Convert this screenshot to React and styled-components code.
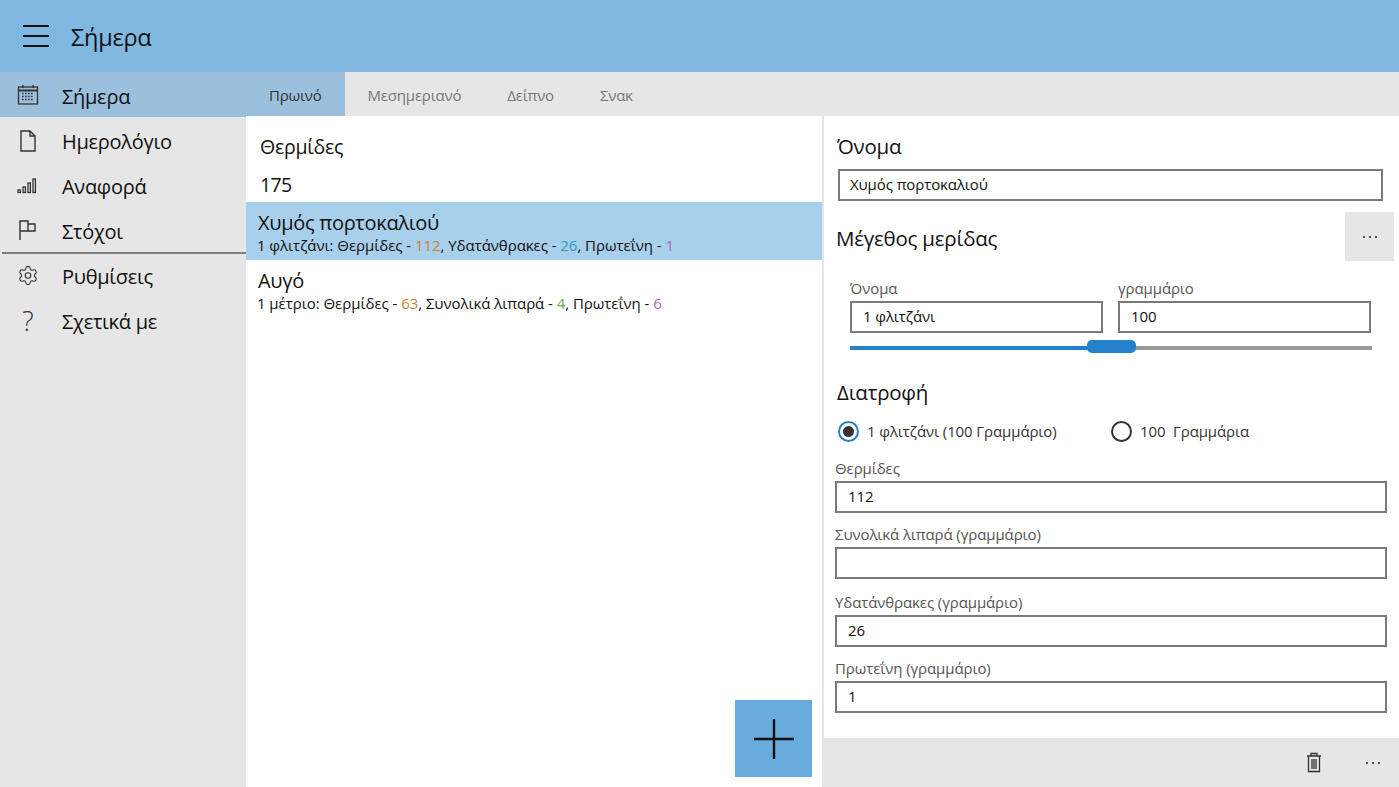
import styled, { createGlobalStyle } from 'styled-components'
import { Settings } from 'lucide-react'

const Global = createGlobalStyle`
  html, body { margin: 0; padding: 0; height: 100%; overflow: hidden; }
  body { font-family: "Open Sans", "Noto Sans", sans-serif; color: #111; background: #fff; }
  * { box-sizing: border-box; }
`
const Page = styled.div`
  width: 1399px;
  height: 787px;
  display: flex;
  flex-direction: column;
`
const Header = styled.header`
  height: 72px;
  background: #7fb8e1;
  display: flex;
  align-items: center;
  padding-left: 23px;
  gap: 22px;
`
const Burger = styled.div`
  width: 26px;
  height: 22px;
  display: flex;
  flex-direction: column;
  justify-content: space-between;
  span { display: block; height: 2px; background: #111; }
`
const Title = styled.div`
  font-size: 23.5px;
  letter-spacing: -0.25px;
  margin-top: 1px;
`
const Body = styled.div`
  flex: 1;
  display: flex;
  min-height: 0;
`
const Sidebar = styled.nav`
  width: 246px;
  background: #e6e6e6;
  display: flex;
  flex-direction: column;
`
const NavRow = styled.div`
  height: 45px;
  display: flex;
  align-items: center;
  padding-left: 17px;
  background: ${p => (p.$active ? '#9bc0dd' : 'transparent')};
`
const NavIcon = styled.div`
  width: 22px;
  height: 22px;
  margin-right: 23px;
  margin-top: ${p => p.$drop || 0}px;
  display: flex;
  align-items: center;
  justify-content: center;
  color: #333;
  font-size: 27px;
  font-weight: 300;
`
const NavText = styled.div`
  font-size: 20px;
  letter-spacing: -0.28px;
  padding-top: 4px;
`
const Divider = styled.div`
  height: 2px;
  margin: 0 0 -2px 2px;
  background: #7d7d7d;
`
const Main = styled.div`
  flex: 1;
  display: flex;
  flex-direction: column;
  min-width: 0;
`
const Tabs = styled.div`
  height: 44px;
  flex: none;
  background: #e6e6e6;
  display: flex;
`
const Tab = styled.div`
  height: 44px;
  padding: 2px 23px 0;
  display: flex;
  align-items: center;
  font-size: 15px;
  letter-spacing: -0.2px;
  color: ${p => (p.$active ? '#333' : '#777')};
  background: ${p => (p.$active ? '#9bc0dd' : 'transparent')};
`
const Content = styled.div`
  flex: 1;
  display: flex;
  min-height: 0;
`
const ListPane = styled.section`
  width: 576px;
  position: relative;
  background: #fff;
`
const TotalLabel = styled.div`
  font-size: 19.5px;
  letter-spacing: -0.27px;
  line-height: 26px;
  padding: 18px 0 0 14px;
`
const TotalValue = styled.div`
  font-size: 19.5px;
  letter-spacing: -0.6px;
  line-height: 26px;
  padding: 12px 0 4px 14px;
`
const FoodRow = styled.div`
  height: 58px;
  padding: 8px 0 0 12px;
  background: ${p => (p.$active ? '#a8cfeb' : 'transparent')};
`
const FoodName = styled.div`
  font-size: 20px;
  line-height: 26px;
  letter-spacing: -0.3px;
`
const FoodInfo = styled.div`
  font-size: 15px;
  line-height: 18px;
  letter-spacing: -0.05px;
  margin-left: -1px;
`
const Num = styled.span`
  color: ${p => p.$color};
`
const Fab = styled.button`
  position: absolute;
  left: 489px;
  top: 584px;
  width: 77px;
  height: 77px;
  border: 0;
  padding: 0;
  background: #68abdd;
  display: flex;
  align-items: center;
  justify-content: center;
`
const DetailPane = styled.aside`
  width: 577px;
  border-left: 2px solid #e6e6e6;
  display: flex;
  flex-direction: column;
  background: #fff;
`
const DetailScroll = styled.div`
  flex: 1;
  padding: 0 12px 0 10px;
`
const Heading = styled.div`
  font-size: 20.5px;
  line-height: 26px;
  letter-spacing: -0.23px;
`
const NameHeading = styled(Heading)`
  padding: 17px 0 0 3px;
`
const Input = styled.div`
  height: 32px;
  border: 2px solid #7a7a7a;
  background: #fff;
  padding: 0 0 2px 11px;
  display: flex;
  align-items: center;
  font-size: 15px;
  letter-spacing: -0.1px;
  color: #111;
`
const NameInput = styled(Input)`
  margin: 10px 4px 0 4px;
  padding-left: 10px;
`
const ServingHead = styled.div`
  display: flex;
  align-items: center;
  justify-content: space-between;
  margin-top: 11px;
  height: 49px;
  padding-left: 2px;
  ${Heading} { padding-top: 2px; }
`
const MoreButton = styled.div`
  width: 49px;
  height: 49px;
  margin-right: -7px;
  background: #e6e6e6;
  display: flex;
  align-items: center;
  justify-content: center;
`
const Dots = styled.div`
  display: flex;
  gap: 4px;
  span { width: 2px; height: 2px; border-radius: 50%; background: #222; }
`
const ServingGrid = styled.div`
  display: grid;
  grid-template-columns: 253px 253px;
  column-gap: 15px;
  margin: 17px 0 0 16px;
`
const FieldLabel = styled.div`
  font-size: 15px;
  line-height: 20px;
  letter-spacing: -0.1px;
  color: #555;
  padding-bottom: 3px;
`
const Slider = styled.div`
  position: relative;
  height: 4px;
  width: 522px;
  margin: 13px 0 0 16px;
  background: #999;
`
const SliderFill = styled.div`
  height: 4px;
  background: #2681cc;
`
const SliderThumb = styled.div`
  position: absolute;
  top: -6px;
  width: 49px;
  height: 13px;
  border-radius: 5px;
  background: #2681cc;
`
const NutritionHeading = styled(Heading)`
  margin: 29px 0 0 3px;
`
const RadioRow = styled.div`
  display: flex;
  align-items: center;
  margin: 14px 0 0 4px;
  height: 24px;
`
const Radio = styled.div`
  display: flex;
  align-items: center;
  width: ${p => p.$w}px;
  font-size: 15px;
  letter-spacing: -0.1px;
  color: #333;
  white-space: pre;
`
const RadioDot = styled.div`
  width: 21px;
  height: 21px;
  border-radius: 50%;
  border: 2px solid ${p => (p.$on ? '#2681cc' : '#333')};
  margin-right: 8px;
  display: flex;
  align-items: center;
  justify-content: center;
  &::after {
    content: '';
    display: ${p => (p.$on ? 'block' : 'none')};
    width: 11px;
    height: 11px;
    border-radius: 50%;
    background: #333;
  }
`
const Field = styled.div`
  margin: ${p => p.$top}px 0 0 1px;
`
const FooterBar = styled.div`
  height: 49px;
  flex: none;
  background: #e6e6e6;
  display: flex;
  align-items: center;
  justify-content: flex-end;
  padding-right: 19px;
  gap: 44px;
`

const CalendarIcon = () => (
  <svg width="22" height="22" viewBox="0 0 22 22" fill="none" stroke="#333" strokeWidth="1.3">
    <rect x="1.5" y="3" width="19" height="17" />
    <path d="M1.5 6.5h19" strokeWidth="2" />
    <path d="M6 1v3M16 1v3" />
    <path d="M5 9.5h12M5 12.5h12M5 15.5h12" strokeDasharray="1.6 1.4" strokeWidth="1.6" />
  </svg>
)
const FileIcon = () => (
  <svg width="18" height="22" viewBox="0 0 18 22" fill="none" stroke="#333" strokeWidth="1.4">
    <path d="M2 1h9l5 5v15H2zM11 1v5h5" />
  </svg>
)
const BarsIcon = () => (
  <svg width="22" height="22" viewBox="0 0 22 22" fill="none" stroke="#333" strokeWidth="1.3">
    <rect x="1" y="16" width="2.4" height="2.5" />
    <rect x="6" y="13" width="2.4" height="5.5" />
    <rect x="11" y="9" width="2.4" height="9.5" />
    <rect x="16" y="5" width="2.4" height="13.5" />
  </svg>
)
const FlagIcon = () => (
  <svg width="20" height="22" viewBox="0 0 20 22" fill="none" stroke="#333" strokeWidth="1.4">
    <path d="M2 21V2h8v3h7v7h-7V5M2 12h8" />
  </svg>
)
const PlusIcon = () => (
  <svg width="40" height="40" viewBox="0 0 40 40" stroke="#111" strokeWidth="2.4">
    <path d="M20 0v40M0 20h40" />
  </svg>
)
const TrashIcon = () => (
  <svg width="16" height="21" viewBox="0 0 16 21" fill="none" stroke="#333" strokeWidth="1.3">
    <path d="M1 4h14M5 4V1.5h6V4M2.5 4v15.5h11V4" />
    <path d="M6 7v10M8 7v10M10 7v10" />
  </svg>
)
const ThreeDots = () => (
  <Dots><span /><span /><span /></Dots>
)

const nav = [
  { text: 'Σήμερα', icon: <CalendarIcon />, drop: 0 },
  { text: 'Ημερολόγιο', icon: <FileIcon />, drop: 2 },
  { text: 'Αναφορά', icon: <BarsIcon />, drop: 1 },
  { text: 'Στόχοι', icon: <FlagIcon />, drop: 1 },
]
const fields = [
  { label: 'Θερμίδες', value: '112', top: 15 },
  { label: 'Συνολικά λιπαρά (γραμμάριο)', value: '', top: 11 },
  { label: 'Υδατάνθρακες (γραμμάριο)', value: '26', top: 13 },
  { label: 'Πρωτεΐνη (γραμμάριο)', value: '1', top: 11 },
]

export default function App() {
  return (
    <Page>
      <Global />
      <Header>
        <Burger><span /><span /><span /></Burger>
        <Title>Σήμερα</Title>
      </Header>
      <Body>
        <Sidebar>
          {nav.map((item, i) => (
            <NavRow key={item.text} $active={i === 0}>
              <NavIcon $drop={item.drop}>{item.icon}</NavIcon>
              <NavText>{item.text}</NavText>
            </NavRow>
          ))}
          <Divider />
          <NavRow>
            <NavIcon $drop={2}><Settings size={23} strokeWidth={1.2} /></NavIcon>
            <NavText>Ρυθμίσεις</NavText>
          </NavRow>
          <NavRow>
            <NavIcon $drop={2}>?</NavIcon>
            <NavText>Σχετικά με</NavText>
          </NavRow>
        </Sidebar>
        <Main>
          <Tabs>
            <Tab $active>Πρωινό</Tab>
            <Tab>Μεσημεριανό</Tab>
            <Tab>Δείπνο</Tab>
            <Tab>Σνακ</Tab>
          </Tabs>
          <Content>
            <ListPane>
              <TotalLabel>Θερμίδες</TotalLabel>
              <TotalValue>175</TotalValue>
              <FoodRow $active>
                <FoodName>Χυμός πορτοκαλιού</FoodName>
                <FoodInfo>
                  1 φλιτζάνι: Θερμίδες - <Num $color="#c4843c">112</Num>, Υδατάνθρακες - <Num $color="#2f9cc4">26</Num>, Πρωτεΐνη - <Num $color="#b06ab3">1</Num>
                </FoodInfo>
              </FoodRow>
              <FoodRow>
                <FoodName>Αυγό</FoodName>
                <FoodInfo>
                  1 μέτριο: Θερμίδες - <Num $color="#c4843c">63</Num>, Συνολικά λιπαρά - <Num $color="#66a845">4</Num>, Πρωτεΐνη - <Num $color="#b06ab3">6</Num>
                </FoodInfo>
              </FoodRow>
              <Fab><PlusIcon /></Fab>
            </ListPane>
            <DetailPane>
              <DetailScroll>
                <NameHeading>Όνομα</NameHeading>
                <NameInput>Χυμός πορτοκαλιού</NameInput>
                <ServingHead>
                  <Heading>Μέγεθος μερίδας</Heading>
                  <MoreButton><ThreeDots /></MoreButton>
                </ServingHead>
                <ServingGrid>
                  <div>
                    <FieldLabel>Όνομα</FieldLabel>
                    <Input>1 φλιτζάνι</Input>
                  </div>
                  <div>
                    <FieldLabel>γραμμάριο</FieldLabel>
                    <Input>100</Input>
                  </div>
                </ServingGrid>
                <Slider>
                  <SliderFill style={{ width: 250 }} />
                  <SliderThumb style={{ left: 237 }} />
                </Slider>
                <NutritionHeading>Διατροφή</NutritionHeading>
                <RadioRow>
                  <Radio $w={273}><RadioDot $on />1 φλιτζάνι (100 Γραμμάριο)</Radio>
                  <Radio $w={200}><RadioDot />100  Γραμμάρια</Radio>
                </RadioRow>
                {fields.map(f => (
                  <Field key={f.label} $top={f.top}>
                    <FieldLabel>{f.label}</FieldLabel>
                    <Input>{f.value}</Input>
                  </Field>
                ))}
              </DetailScroll>
              <FooterBar>
                <TrashIcon />
                <ThreeDots />
              </FooterBar>
            </DetailPane>
          </Content>
        </Main>
      </Body>
    </Page>
  )
}
